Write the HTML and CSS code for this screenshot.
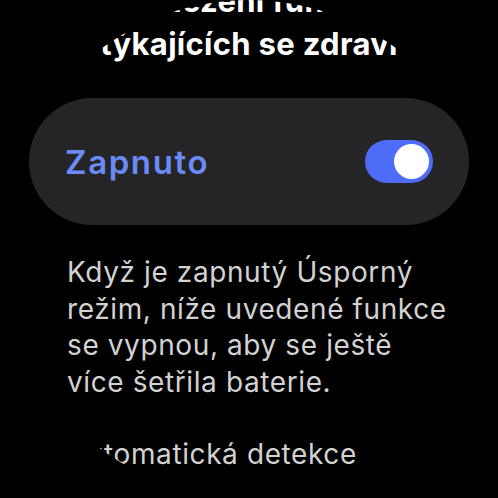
FILE: index.html
```html
<!DOCTYPE html>
<html lang="cs">
<head>
<meta charset="utf-8">
<link rel="stylesheet" href="styles.css">
</head>
<body>
<div class="screen">
  <h1 class="title">Omezení funkcí<br>týkajících se zdraví</h1>
  <div class="card">
    <span class="card-label">Zapnuto</span>
    <span class="switch"><span class="knob"></span></span>
  </div>
  <p class="desc">Když je zapnutý Úsporný<br>režim, níže uvedené funkce<br>se vypnou, aby se ještě<br>více šetřila baterie.</p>
  <p class="item">Automatická detekce</p>
</div>
</body>
</html>
```
FILE: styles.css
```css
html, body {
  margin: 0;
  padding: 0;
  background: #000;
}
.screen {
  width: 498px;
  height: 498px;
  overflow: hidden;
  clip-path: circle(249px at 249px 249px);
  background: #000;
  font-family: Inter, "Noto Sans", sans-serif;
}
.title {
  margin: -21px 0 0;
  font-size: 31px;
  line-height: 43px;
  font-weight: 700;
  color: #fff;
  text-align: center;
  letter-spacing: 0.3px;
}
.card {
  margin: 33px 29px 0;
  height: 127px;
  border-radius: 64px;
  background: #252527;
  display: flex;
  align-items: center;
  justify-content: space-between;
  padding: 0 36px 0 36px;
}
.card-label {
  font-size: 33px;
  font-weight: 600;
  color: #6a8cf6;
  letter-spacing: 1.6px;
}
.switch {
  width: 68px;
  height: 43px;
  border-radius: 22px;
  background: #4d6cf8;
  display: flex;
  align-items: center;
  justify-content: flex-end;
  padding-right: 4px;
  box-sizing: border-box;
}
.knob {
  width: 35px;
  height: 35px;
  border-radius: 50%;
  background: #fff;
}
.desc {
  margin: 29px 0 0;
  padding-left: 67px;
  font-size: 28px;
  line-height: 36.7px;
  color: #d2d2d2;
  letter-spacing: 0.6px;
}
.item {
  margin: 35px 0 0;
  padding-left: 67px;
  font-size: 28px;
  line-height: 36.7px;
  color: #d2d2d2;
  letter-spacing: 0.6px;
}
```
